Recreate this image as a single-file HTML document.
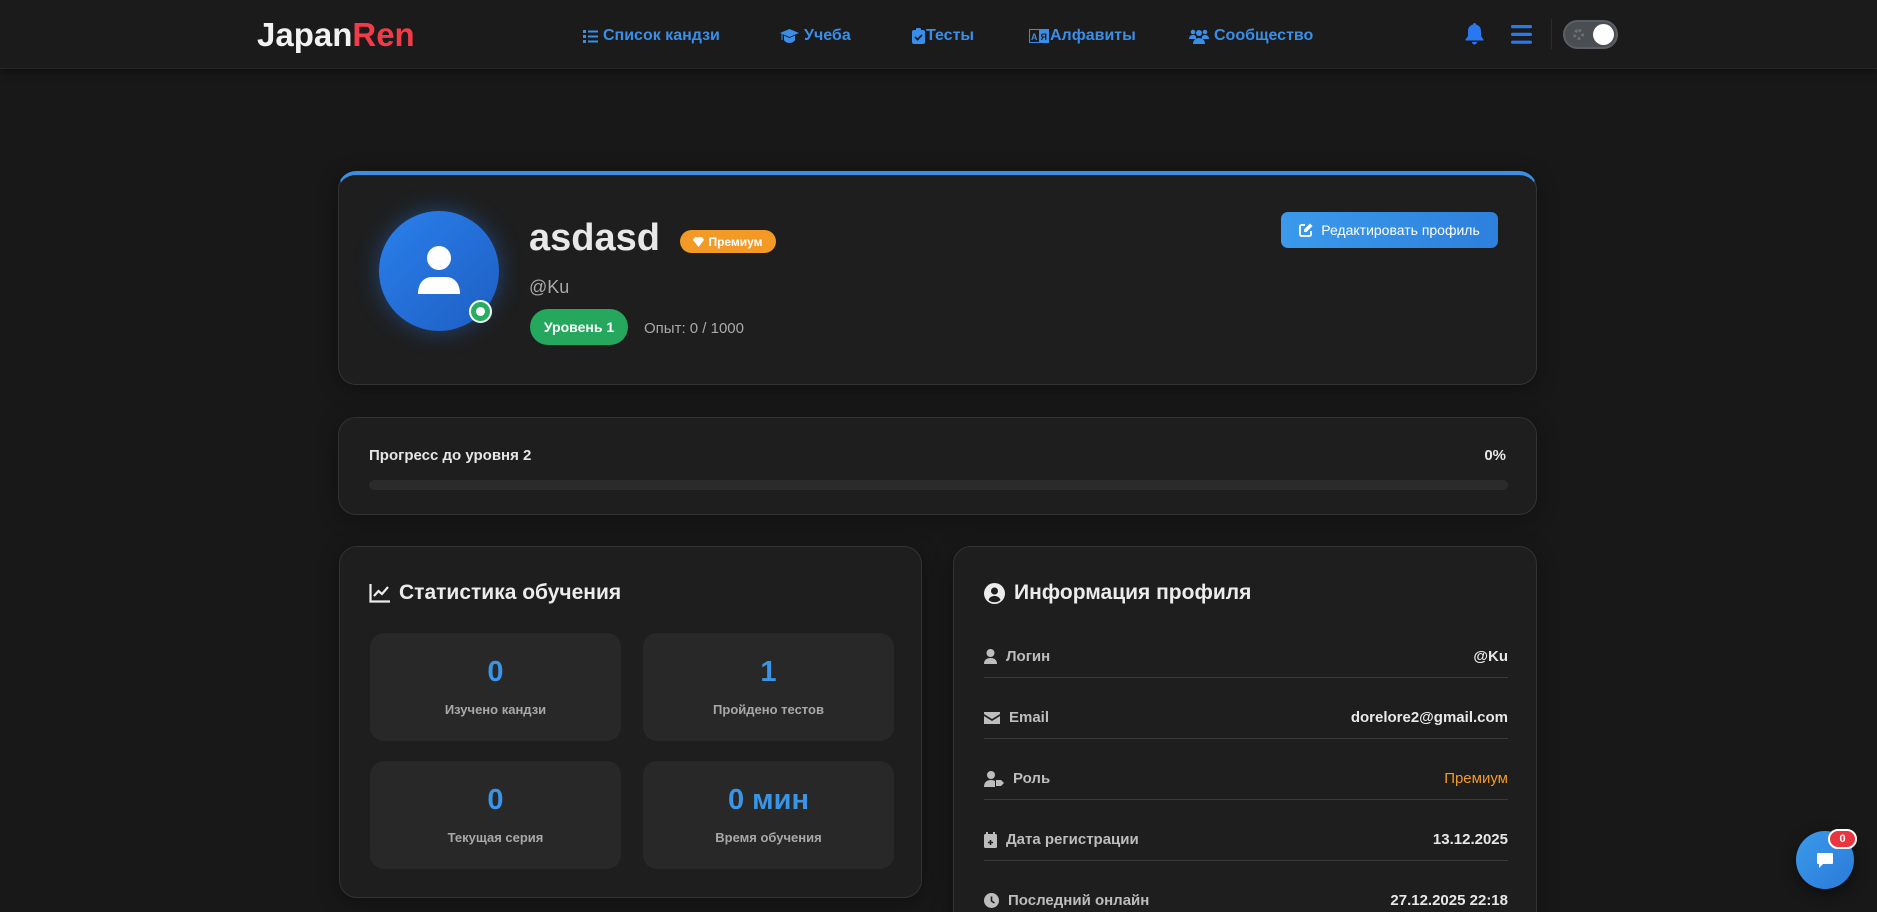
<!DOCTYPE html>
<html><head><meta charset="utf-8"><style>
*{box-sizing:border-box;margin:0;padding:0}
html,body{width:1877px;height:912px;overflow:hidden;background:#181818;font-family:"Liberation Sans","DejaVu Sans",sans-serif;color:#e6e6e6}
#wrap{position:relative;width:1877px;height:912px;overflow:hidden}
.abs{position:absolute}
.nav{position:absolute;left:0;top:0;width:1877px;height:69px;background:#1b1b1b;border-bottom:1px solid #262626;box-shadow:0 2px 8px rgba(0,0,0,.5)}
.logo{left:257px;top:16px;font-size:33px;font-weight:bold;letter-spacing:0;color:#f2f2f2}
.logo span{color:#f23b48}
.nl{top:27px;font-size:16px;font-weight:bold;color:#3a8ee8;display:flex;align-items:center;gap:5px;white-space:nowrap}
.card{position:absolute;background:#1e1e1e;border:1px solid #333;border-radius:18px;box-shadow:0 4px 20px rgba(0,0,0,.35)}
.stat{position:absolute;width:251px;height:108px;background:#282828;border-radius:14px;text-align:center}
.stat b{display:block;margin-top:22px;font-size:29px;color:#3a95e6;line-height:34px}
.stat i{display:block;font-style:normal;margin-top:13px;font-size:13px;font-weight:bold;color:#a8a8a8}
.row{position:absolute;left:30px;width:524px;height:61px;border-bottom:1px solid #3a3a3a;font-size:15px}
.row .l{position:absolute;left:0;top:31px;color:#bdbdbd;font-weight:bold;display:flex;align-items:center;gap:9px}
.row .v{position:absolute;right:0;top:31px;font-weight:bold;color:#e8e8e8}
</style></head><body><div id="wrap">
<div class="nav">
 <div class="abs logo">Japan<span>Ren</span></div>
 <div class="abs nl" style="left:583px"><svg width="15" height="13" viewBox="0 0 15 13" fill="#3a8ee8"><rect x="0" y="0" width="3" height="3"/><rect x="5" y="0.5" width="10" height="2"/><rect x="0" y="5" width="3" height="3"/><rect x="5" y="5.5" width="10" height="2"/><rect x="0" y="10" width="3" height="3"/><rect x="5" y="10.5" width="10" height="2"/></svg>Список кандзи</div>
 <div class="abs nl" style="left:780px"><svg width="19" height="15" viewBox="0 0 19 15" fill="#3a8ee8"><path d="M9.5 0L19 4 9.5 8 0 4z"/><path d="M4 6.5v4c0 2 3 3.5 5.5 3.5S15 12.5 15 10.5v-4L9.5 9z"/><rect x="1.5" y="4" width="1" height="7"/></svg>Учеба</div>
 <div class="abs nl" style="left:912px;gap:1px"><svg width="13" height="16" viewBox="0 0 13 16" fill="#3a8ee8"><rect x="0" y="2" width="13" height="14" rx="2"/><rect x="4" y="0" width="5" height="4" rx="1"/><path d="M3 9l2.5 2.5L10 7" stroke="#1b1b1b" stroke-width="1.8" fill="none"/></svg>Тесты</div>
 <div class="abs nl" style="left:1029px;gap:1px"><svg width="20" height="14" viewBox="0 0 20 14"><rect x="0.5" y="0.5" width="19" height="13" fill="none" stroke="#3a8ee8"/><rect x="10" y="1" width="9" height="12" fill="#3a8ee8"/><text x="2" y="11" font-size="9" fill="#3a8ee8" font-family="Liberation Sans" font-weight="bold">A</text><text x="11.5" y="11" font-size="9" fill="#1b1b1b" font-family="Liberation Sans" font-weight="bold">Я</text></svg>Алфавиты</div>
 <div class="abs nl" style="left:1189px"><svg width="20" height="15" viewBox="0 0 20 15" fill="#3a8ee8"><circle cx="4" cy="3" r="2.3"/><circle cx="16" cy="3" r="2.3"/><circle cx="10" cy="4" r="3"/><path d="M0 10c0-3 2-4 4-4s3 1 3 2v2z"/><path d="M20 10c0-3-2-4-4-4s-3 1-3 2v2z"/><path d="M4 15c0-4 3-6 6-6s6 2 6 6z"/></svg>Сообщество</div>
 <svg class="abs" style="left:1465px;top:23px" width="19" height="22" viewBox="0 0 19 22" fill="#2a78f0"><path d="M9.5 0c1 0 1.5.8 1.5 1.5 3 .7 5 3.3 5 6.5v5l2.5 3.5v1H.5v-1L3 13V8c0-3.2 2-5.8 5-6.5C8 .8 8.5 0 9.5 0z"/><path d="M7 19h5a2.5 2.5 0 0 1-5 0z"/></svg>
 <svg class="abs" style="left:1511px;top:25px" width="21" height="19" viewBox="0 0 21 19" fill="#2a78f0"><rect y="0" width="21" height="3.2" rx="1.5"/><rect y="7.8" width="21" height="3.2" rx="1.5"/><rect y="15.6" width="21" height="3.2" rx="1.5"/></svg>
 <div class="abs" style="left:1551px;top:19px;width:1px;height:30px;background:#2c2c2c"></div>
 <div class="abs" style="left:1563px;top:20px;width:55px;height:29px;border-radius:15px;background:#4a4d52;border:2px solid #5b5e63">
  <div class="abs" style="left:8px;top:7px;width:11px;height:11px;border-radius:50%;border:3px dotted #6b6e73"></div>
  <div class="abs" style="right:2px;top:2px;width:21px;height:21px;border-radius:50%;background:#fff"></div>
 </div>
</div>

<div class="card" style="left:338px;top:171px;width:1199px;height:214px;border-top:4px solid #3a8ee6">
 <div class="abs" style="left:40px;top:36px;width:120px;height:120px;border-radius:50%;background:linear-gradient(135deg,#2b80ec,#1d5ec2);box-shadow:0 0 24px rgba(42,120,230,.45)">
  <svg class="abs" style="left:39px;top:35px" width="42" height="48" viewBox="0 0 42 48" fill="#fff"><circle cx="21" cy="12" r="12"/><path d="M0 48c0-11 6-17 14-17h14c8 0 14 6 14 17z"/></svg>
 </div>
 <div class="abs" style="left:130px;top:125px;width:23px;height:23px;border-radius:50%;background:#27ae60;border:2px solid #fff"><div class="abs" style="left:5px;top:5px;width:9px;height:9px;border-radius:50%;background:#fff"></div></div>
 <div class="abs" style="left:190px;top:42px;font-size:38px;font-weight:bold;color:#e8e8e8">asdasd</div>
 <div class="abs" style="left:341px;top:55px;width:96px;height:23px;border-radius:12px;background:#f39a26;color:#fff;font-size:12px;font-weight:bold;display:flex;align-items:center;justify-content:center;gap:4px"><svg width="11" height="10" viewBox="0 0 11 10" fill="#fff"><path d="M2 0h7l2 3-5.5 7L0 3z"/></svg>Премиум</div>
 <div class="abs" style="left:190px;top:102px;font-size:18px;color:#a9a9a9">@Ku</div>
 <div class="abs" style="left:191px;top:134px;width:98px;height:36px;border-radius:18px;background:#25a85e;color:#fff;font-size:14px;font-weight:bold;display:flex;align-items:center;justify-content:center">Уровень 1</div>
 <div class="abs" style="left:305px;top:145px;font-size:15px;color:#a9a9a9">Опыт: 0 / 1000</div>
 <div class="abs" style="left:942px;top:37px;width:217px;height:36px;border-radius:7px;background:linear-gradient(90deg,#3b9aeb,#2d80dc);color:#fff;font-size:14px;display:flex;align-items:center;justify-content:center;gap:8px"><svg width="14" height="14" viewBox="0 0 14 14"><path d="M6 2H2.5A1.5 1.5 0 0 0 1 3.5v8A1.5 1.5 0 0 0 2.5 13h8a1.5 1.5 0 0 0 1.5-1.5V8" stroke="#fff" stroke-width="1.8" fill="none"/><path d="M11 0.5l2.5 2.5-6 6H5V6.5z" fill="#fff"/></svg>Редактировать профиль</div>
</div>

<div class="card" style="left:338px;top:417px;width:1199px;height:98px">
 <div class="abs" style="left:30px;top:29px;font-size:15px;font-weight:bold;color:#e6e6e6">Прогресс до уровня 2</div>
 <div class="abs" style="right:30px;top:29px;font-size:15px;font-weight:bold;color:#e6e6e6">0%</div>
 <div class="abs" style="left:30px;top:62px;width:1139px;height:10px;border-radius:5px;background:#2b2b2b"></div>
</div>

<div class="card" style="left:339px;top:546px;width:583px;height:352px">
 <div class="abs" style="left:29px;top:34px;font-size:21px;font-weight:bold;color:#ececec;display:flex;align-items:center;gap:9px"><svg width="21" height="19" viewBox="0 0 21 19" fill="none" stroke="#ececec" stroke-width="2.2"><path d="M1.5 0v17.5H21"/><path d="M5 12l4.5-5 3.5 3 6-7"/></svg>Статистика обучения</div>
 <div class="stat" style="left:30px;top:86px"><b>0</b><i>Изучено кандзи</i></div>
 <div class="stat" style="left:303px;top:86px"><b>1</b><i>Пройдено тестов</i></div>
 <div class="stat" style="left:30px;top:214px"><b>0</b><i>Текущая серия</i></div>
 <div class="stat" style="left:303px;top:214px"><b>0 мин</b><i>Время обучения</i></div>
</div>

<div class="card" style="left:953px;top:546px;width:584px;height:420px">
 <div class="abs" style="left:30px;top:34px;font-size:21px;font-weight:bold;color:#ececec;display:flex;align-items:center;gap:9px"><svg width="21" height="21" viewBox="0 0 21 21"><circle cx="10.5" cy="10.5" r="10.5" fill="#ececec"/><circle cx="10.5" cy="8" r="3.5" fill="#1e1e1e"/><path d="M4.5 17c1-3 3.5-4 6-4s5 1 6 4a9 9 0 0 1-12 0z" fill="#1e1e1e"/></svg>Информация профиля</div>
 <div class="row" style="top:70px"><div class="l"><svg width="13" height="15" viewBox="0 0 13 15" fill="#bdbdbd"><circle cx="6.5" cy="4" r="4"/><path d="M0 15c0-4 2.5-6 6.5-6s6.5 2 6.5 6z"/></svg>Логин</div><div class="v">@Ku</div></div>
 <div class="row" style="top:131px"><div class="l"><svg width="16" height="12" viewBox="0 0 16 12" fill="#bdbdbd"><path d="M0 0h16v2L8 7 0 2z"/><path d="M0 4l8 5 8-5v8H0z"/></svg>Email</div><div class="v">dorelore2@gmail.com</div></div>
 <div class="row" style="top:192px"><div class="l"><svg width="20" height="16" viewBox="0 0 20 16" fill="#bdbdbd"><circle cx="7" cy="4" r="4"/><path d="M0 16c0-5 3-7 7-7 2 0 3 .5 4 1v6z"/><path d="M12 9l5 0 3 3-3 3-5 0z"/></svg>Роль</div><div class="v" style="color:#f39a26;font-weight:normal">Премиум</div></div>
 <div class="row" style="top:253px"><div class="l"><svg width="13" height="16" viewBox="0 0 13 16" fill="#bdbdbd"><rect x="2" y="0" width="2" height="3"/><rect x="9" y="0" width="2" height="3"/><rect x="0" y="2" width="13" height="14" rx="1.5"/><path d="M6.5 8v5M4 10.5h5" stroke="#1e1e1e" stroke-width="1.6"/></svg>Дата регистрации</div><div class="v">13.12.2025</div></div>
 <div class="row" style="top:314px;border:none"><div class="l"><svg width="15" height="15" viewBox="0 0 15 15"><circle cx="7.5" cy="7.5" r="7.5" fill="#bdbdbd"/><path d="M7.5 3.5v4.5l3 2" stroke="#1e1e1e" stroke-width="1.6" fill="none"/></svg>Последний онлайн</div><div class="v">27.12.2025 22:18</div></div>
</div>

<div class="abs" style="left:1796px;top:831px;width:58px;height:58px;border-radius:50%;background:linear-gradient(135deg,#3b9aeb,#2a7ad8);box-shadow:0 4px 14px rgba(0,0,0,.5)">
 <svg class="abs" style="left:21px;top:22px" width="16" height="15" viewBox="0 0 16 15" fill="#fff"><path d="M1 0h14a1 1 0 0 1 1 1v9a1 1 0 0 1-1 1H6l-4 4v-4H1a1 1 0 0 1-1-1V1a1 1 0 0 1 1-1z"/></svg>
</div>
<div class="abs" style="left:1828px;top:829px;width:29px;height:20px;border-radius:10px;background:#e8353f;border:2px solid #fff;color:#fff;font-size:11px;font-weight:bold;text-align:center;line-height:16px">0</div>
</div></body></html>
